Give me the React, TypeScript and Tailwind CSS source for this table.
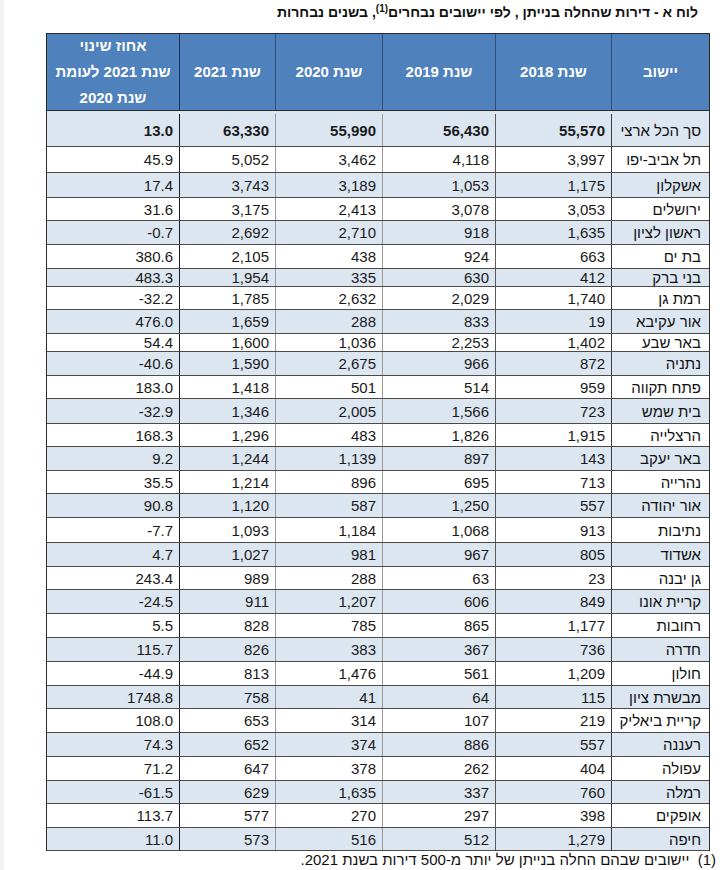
import React from 'react';

type Row = {
  name: string;
  vals: [string, string, string, string, string];
  h: string;
};

// widths, right to left: יישוב, 2018, 2019, 2020, 2021, אחוז
const colW = ['w-[98px]', 'w-[116px]', 'w-[113px]', 'w-[107px]', 'w-[96px]', 'w-[132px]'];
const colBorder = [
  'border-l border-[#3a3a3a]',
  'border-l border-[#5a5a5a]',
  'border-l border-[#9a9a9a]',
  'border-l border-[#9a9a9a]',
  'border-l border-[#1f1f1f]',
  '',
];
const headBorder = [
  'border-l border-[#2f4d78]',
  'border-l border-[#2f4d78]',
  'border-l border-[#2f4d78]',
  'border-l border-[#2f4d78]',
  'border-l border-[#1f3350]',
  '',
];

const rows: Row[] = [
  { name: 'תל אביב-יפו', vals: ['3,997', '4,118', '3,462', '5,052', '45.9'], h: 'h-[26px]' },
  { name: 'אשקלון', vals: ['1,175', '1,053', '3,189', '3,743', '17.4'], h: 'h-[25px]' },
  { name: 'ירושלים', vals: ['3,053', '3,078', '2,413', '3,175', '31.6'], h: 'h-[23px]' },
  { name: 'ראשון לציון', vals: ['1,635', '918', '2,710', '2,692', '-0.7'], h: 'h-[24px]' },
  { name: 'בת ים', vals: ['663', '924', '438', '2,105', '380.6'], h: 'h-[24px]' },
  { name: 'בני ברק', vals: ['412', '630', '335', '1,954', '483.3'], h: 'h-[18px]' },
  { name: 'רמת גן', vals: ['1,740', '2,029', '2,632', '1,785', '-32.2'], h: 'h-[23px]' },
  { name: 'אור עקיבא', vals: ['19', '833', '288', '1,659', '476.0'], h: 'h-[24px]' },
  { name: 'באר שבע', vals: ['1,402', '2,253', '1,036', '1,600', '54.4'], h: 'h-[18px]' },
  { name: 'נתניה', vals: ['872', '966', '2,675', '1,590', '-40.6'], h: 'h-[24px]' },
  { name: 'פתח תקווה', vals: ['959', '514', '501', '1,418', '183.0'], h: 'h-[23px]' },
  { name: 'בית שמש', vals: ['723', '1,566', '2,005', '1,346', '-32.9'], h: 'h-[25px]' },
  { name: 'הרצלייה', vals: ['1,915', '1,826', '483', '1,296', '168.3'], h: 'h-[23px]' },
  { name: 'באר יעקב', vals: ['143', '897', '1,139', '1,244', '9.2'], h: 'h-[24px]' },
  { name: 'נהרייה', vals: ['713', '695', '896', '1,214', '35.5'], h: 'h-[23px]' },
  { name: 'אור יהודה', vals: ['557', '1,250', '587', '1,120', '90.8'], h: 'h-[24px]' },
  { name: 'נתיבות', vals: ['913', '1,068', '1,184', '1,093', '-7.7'], h: 'h-[25px]' },
  { name: 'אשדוד', vals: ['805', '967', '981', '1,027', '4.7'], h: 'h-[24px]' },
  { name: 'גן יבנה', vals: ['23', '63', '288', '989', '243.4'], h: 'h-[23px]' },
  { name: 'קריית אונו', vals: ['849', '606', '1,207', '911', '-24.5'], h: 'h-[24px]' },
  { name: 'רחובות', vals: ['1,177', '865', '785', '828', '5.5'], h: 'h-[24px]' },
  { name: 'חדרה', vals: ['736', '367', '383', '826', '115.7'], h: 'h-[24px]' },
  { name: 'חולון', vals: ['1,209', '561', '1,476', '813', '-44.9'], h: 'h-[24px]' },
  { name: 'מבשרת ציון', vals: ['115', '64', '41', '758', '1748.8'], h: 'h-[23px]' },
  { name: 'קריית ביאליק', vals: ['219', '107', '314', '653', '108.0'], h: 'h-[24px]' },
  { name: 'רעננה', vals: ['557', '886', '374', '652', '74.3'], h: 'h-[24px]' },
  { name: 'עפולה', vals: ['404', '262', '378', '647', '71.2'], h: 'h-[24px]' },
  { name: 'רמלה', vals: ['760', '337', '1,635', '629', '-61.5'], h: 'h-[23px]' },
  { name: 'אופקים', vals: ['398', '297', '270', '577', '113.7'], h: 'h-[24px]' },
  { name: 'חיפה', vals: ['1,279', '512', '516', '573', '11.0'], h: 'h-[23px]' },
];

const headers: React.ReactNode[] = [
  'יישוב',
  'שנת 2018',
  'שנת 2019',
  'שנת 2020',
  'שנת 2021',
  <>
    <div>אחוז שינוי</div>
    <div>שנת 2021 לעומת</div>
    <div>שנת 2020</div>
  </>,
];

const DataRow: React.FC<{ row: Row; striped: boolean; h: string; bold?: boolean }> = ({ row, striped, h, bold }) => (
  <div className={`flex ${h} border-b border-[#4a4a4a] ${striped ? 'bg-[#dce6f1]' : 'bg-white'}`}>
    <div className={`${colW[0]} ${colBorder[0]} flex items-center pr-[8px] text-[#111]`}>{row.name}</div>
    {row.vals.map((v, i) => (
      <div
        key={i}
        dir="ltr"
        className={`${colW[i + 1]} ${colBorder[i + 1]} flex items-center justify-end pr-[6px] text-[#1a1a1a] ${bold ? 'font-bold' : ''}`}
      >
        {v}
      </div>
    ))}
  </div>
);

export default function App() {
  return (
    <div className="flex w-[720px] h-[870px] bg-white text-[15px] font-['Liberation_Sans','DejaVu_Sans',sans-serif]">
      <div className="w-[4px] bg-[#f3f3f3]" />
      <div dir="rtl" className="flex-1 flex flex-col">
        <div className="h-[33px] pt-[2px] pr-[22px] text-[14px] leading-[20px] font-bold text-[#111]">
          לוח א - דירות שהחלה בנייתן , לפי יישובים נבחרים
          <sup className="text-[10px] font-bold">(1)</sup>, בשנים נבחרות
        </div>

        <div className="mr-[10px] w-[664px] border-t border-x border-[#2b2b2b] leading-none">
          {/* header */}
          <div className="flex h-[77px] bg-[#4f81bd] border-b border-[#2b2b2b] text-white font-bold">
            {headers.map((h, i) => (
              <div
                key={i}
                className={`${colW[i]} ${headBorder[i]} flex flex-col items-center justify-center text-center leading-[26px]`}
              >
                {h}
              </div>
            ))}
          </div>

          {/* total */}
          <DataRow
            row={{ name: 'סך הכל ארצי', vals: ['55,570', '56,430', '55,990', '63,330', '13.0'], h: '' }}
            striped
            h="h-[36px] pt-[3px]"
            bold
          />

          {rows.map((r, i) => (
            <DataRow key={r.name} row={r} striped={i % 2 === 1} h={r.h} />
          ))}
        </div>

        <div className="pr-[4px] leading-[17px] text-[#111]">
          (1)&nbsp;&nbsp;יישובים שבהם החלה בנייתן של יותר מ-500 דירות בשנת 2021.
        </div>
      </div>
    </div>
  );
}
